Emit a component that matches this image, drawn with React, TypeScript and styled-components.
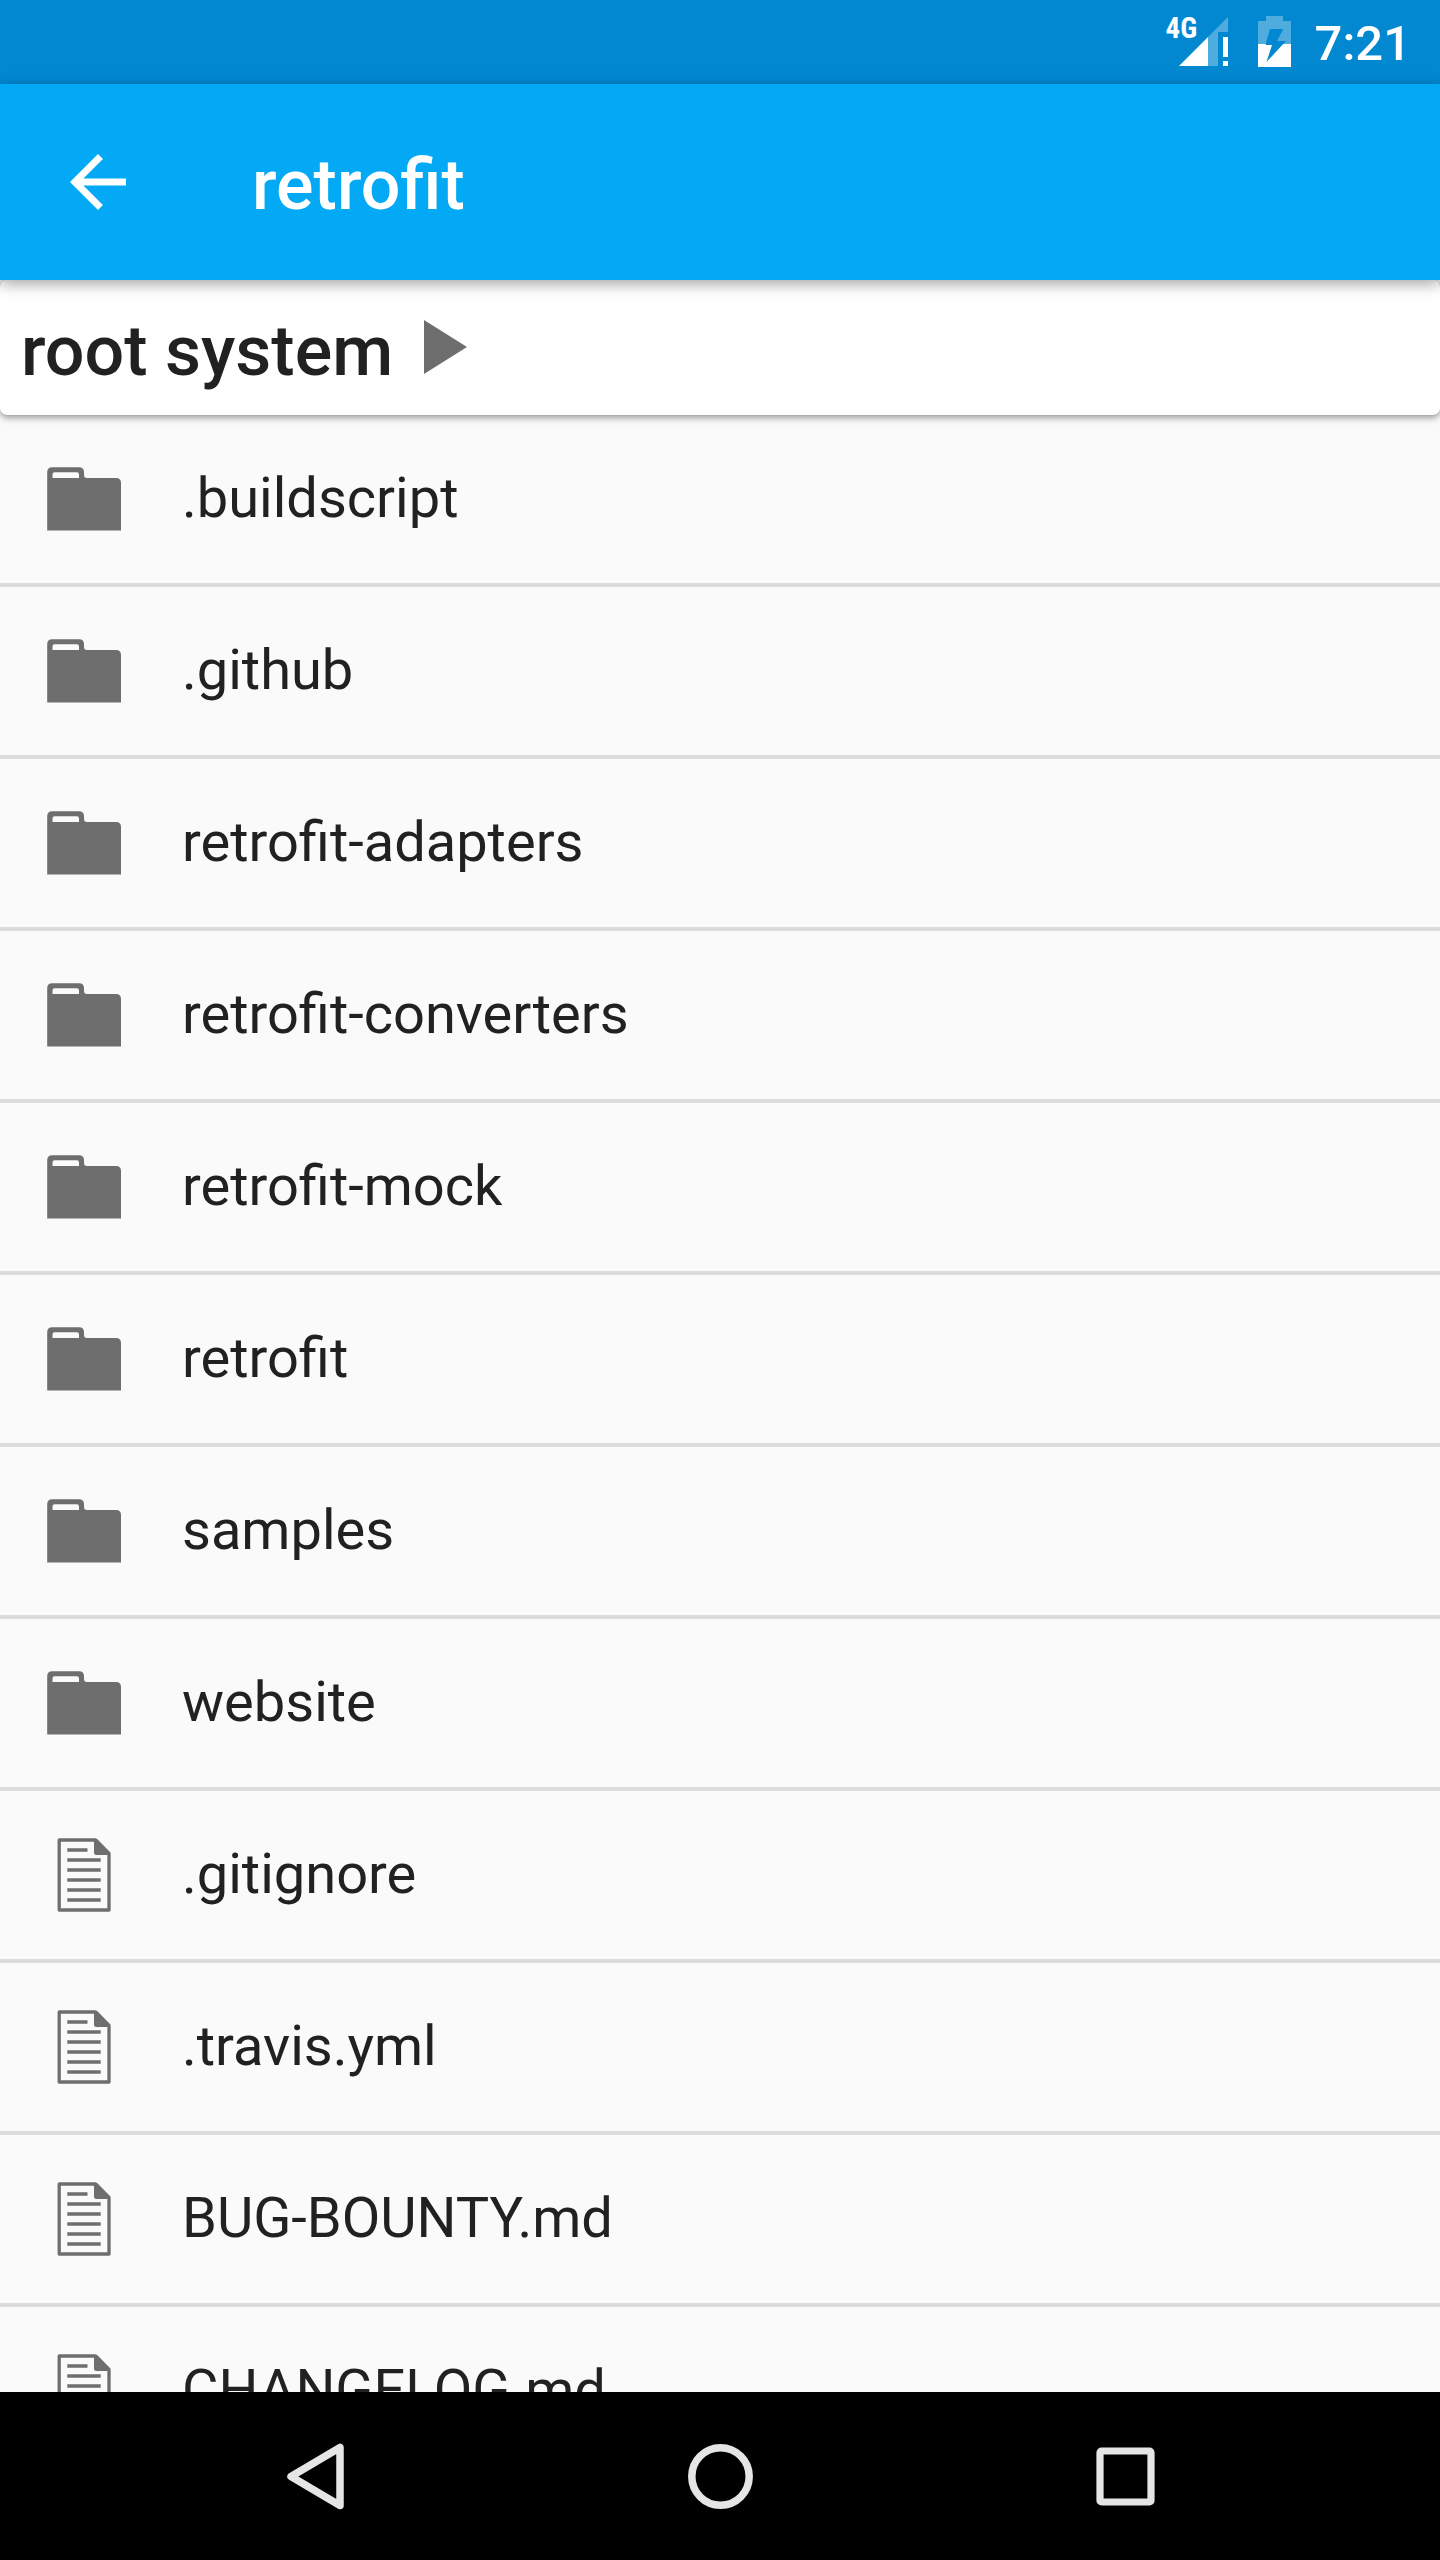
import React from "react";
import styled, { createGlobalStyle } from "styled-components";

const GlobalStyle = createGlobalStyle`
  *, *::before, *::after { box-sizing: border-box; }
  body {
    margin: 0;
    background: #fafafa;
    color: #212121;
    font-family: Roboto, "Liberation Sans", sans-serif;
  }
  button {
    margin: 0;
    padding: 0;
    border: 0;
    background: none;
    color: inherit;
    font: inherit;
    cursor: pointer;
  }
`;

const Screen = styled.div`
  display: flex;
  flex-direction: column;
  height: 100vh;
  overflow: hidden;
`;

const StatusBar = styled.div`
  flex: none;
  display: flex;
  align-items: center;
  justify-content: flex-end;
  height: 84px;
  padding-right: 29px;
  background: #0288d1;
  color: #fff;
`;

const Signal = styled.div`
  position: relative;
  width: 50px;
  height: 52px;
  margin-right: 29px;
`;

const NetworkType = styled.span`
  position: absolute;
  top: 0;
  left: -13px;
  font-family: "Roboto Condensed", "Liberation Sans Narrow", Roboto, sans-serif;
  font-size: 29px;
  font-weight: 700;
  line-height: 24px;
`;

const StatusIcon = styled.svg`
  display: block;
  flex: none;
  height: 52px;
`;

const Clock = styled.time`
  margin-left: 24px;
  padding-top: 4px;
  font-size: 49px;
  font-weight: 500;
  line-height: 80px;
`;

const AppBar = styled.header`
  position: relative;
  z-index: 1;
  flex: none;
  display: flex;
  align-items: center;
  gap: 112px;
  height: 196px;
  padding: 0 56px;
  background: #03a9f4;
  color: #fff;
  box-shadow: 0 4px 14px rgba(0, 0, 0, 0.36);
`;

const IconButton = styled.button`
  flex: none;
  width: 84px;
  height: 84px;
`;

const Icon = styled.svg`
  display: block;
  flex: none;
  width: 84px;
  height: 84px;
`;

const Title = styled.h1`
  margin: 0;
  padding-top: 6px;
  font-size: 70px;
  font-weight: 500;
  line-height: 84px;
`;

const Breadcrumb = styled.nav`
  flex: none;
  display: flex;
  align-items: center;
  height: 135px;
  padding: 7px 21px 0;
  border-radius: 7px;
  background: #fff;
  box-shadow: 0 3px 7px rgba(0, 0, 0, 0.36), 0 0 3px rgba(0, 0, 0, 0.16);
`;

const Crumb = styled.button`
  display: flex;
  align-items: center;
  gap: 31px;
  font-size: 70px;
  font-weight: 500;
  line-height: 84px;
`;

const CrumbArrow = styled.svg`
  display: block;
  width: 43px;
  height: 54px;
  margin-bottom: 9px;
`;

const FileList = styled.ul`
  flex: 1;
  min-height: 0;
  margin: 0;
  padding: 0;
  overflow-y: auto;
  scrollbar-width: none;
  list-style: none;
`;

const Row = styled.li`
  border-bottom: 4px solid #dcdcdc;
`;

const RowLink = styled.a`
  display: flex;
  align-items: center;
  gap: 56px;
  height: 168px;
  padding: 0 42px;
  color: inherit;
  text-decoration: none;
`;

const FileName = styled.span`
  padding-bottom: 3px;
  font-size: 56px;
  line-height: 66px;
`;

const NavBar = styled.nav`
  flex: none;
  display: flex;
  height: 168px;
  padding: 0 112px;
  background: #000;
`;

const NavButton = styled.button`
  flex: 1;
  display: flex;
  align-items: center;
  justify-content: center;
`;

const FolderIcon = () => (
  <Icon viewBox="0 0 84 84" fill="#6e6e6e" aria-hidden="true">
    <path
      fillRule="evenodd"
      d="M5.200 73.500V15.200Q5.200 10.200 10.200 10.200H37Q42 10.200 42 15.200V18Q42 21 45 21H74Q79 21 79 26V73.500ZM10.500 21H37V17.500Q37 15.300 34.800 15.300H12.700Q10.500 15.300 10.500 17.500Z"
    />
  </Icon>
);

const DocumentIcon = () => (
  <Icon viewBox="0 0 84 84" fill="none" stroke="#6e6e6e" strokeWidth="3.300" aria-hidden="true">
    <path d="M17.200 7H53.500L67 20.500V77H17.200Z" strokeLinejoin="round" />
    <path d="M52 6H55L68 19.500V22H54.500Q52 22 52 19.500Z" fill="#6e6e6e" stroke="none" />
    <path d="M25.300 17H45.500M25.300 27H58.700M25.300 37H58.700M25.300 47H58.700M25.300 57H58.700M25.300 67H58.700" />
  </Icon>
);

type Entry = { name: string; kind: "folder" | "file" };

const entries: Entry[] = [
  { name: ".buildscript", kind: "folder" },
  { name: ".github", kind: "folder" },
  { name: "retrofit-adapters", kind: "folder" },
  { name: "retrofit-converters", kind: "folder" },
  { name: "retrofit-mock", kind: "folder" },
  { name: "retrofit", kind: "folder" },
  { name: "samples", kind: "folder" },
  { name: "website", kind: "folder" },
  { name: ".gitignore", kind: "file" },
  { name: ".travis.yml", kind: "file" },
  { name: "BUG-BOUNTY.md", kind: "file" },
  { name: "CHANGELOG.md", kind: "file" },
];

export default function App() {
  return (
    <Screen>
      <GlobalStyle />
      <StatusBar>
        <Signal>
          <StatusIcon viewBox="0 0 50 52" width="50" aria-hidden="true">
            <path d="M29 21L49 1V16H39V50H29Z" fill="#fff" fillOpacity="0.300" />
            <path d="M0 50L29 21V50ZM44 21H49V41H44ZM44 45H49V50H44Z" fill="#fff" />
          </StatusIcon>
          <NetworkType>4G</NetworkType>
        </Signal>
        <StatusIcon viewBox="0 0 33 52" width="33" aria-hidden="true">
          <path d="M8 0H25V5H33V28H0V5H8Z" fill="#fff" fillOpacity="0.300" />
          <path d="M0 28H33V51H0Z" fill="#fff" />
          <path d="M12 13H25.300L19 25H28L8.500 46L14 29H7.500Z" fill="#0288d1" />
        </StatusIcon>
        <Clock>7:21</Clock>
      </StatusBar>

      <AppBar>
        <IconButton type="button" aria-label="Back">
          <Icon viewBox="0 0 24 24" fill="currentColor" aria-hidden="true">
            <path d="M20 11H7.830l5.590-5.590L12 4l-8 8 8 8 1.410-1.410L7.830 13H20v-2z" />
          </Icon>
        </IconButton>
        <Title>retrofit</Title>
      </AppBar>

      <Breadcrumb aria-label="Path">
        <Crumb type="button">
          root system
          <CrumbArrow viewBox="0 0 43 54" fill="#6e6e6e" aria-hidden="true">
            <path d="M0 0L43 27L0 54Z" />
          </CrumbArrow>
        </Crumb>
      </Breadcrumb>

      <FileList>
        {entries.map(({ name, kind }) => (
          <Row key={name}>
            <RowLink href={`#${name}`}>
              {kind === "folder" ? <FolderIcon /> : <DocumentIcon />}
              <FileName>{name}</FileName>
            </RowLink>
          </Row>
        ))}
      </FileList>

      <NavBar aria-label="System">
        <NavButton type="button" aria-label="Back">
          <Icon viewBox="0 0 84 84" fill="none" stroke="#e5e5e5" strokeWidth="7.500" strokeLinejoin="round" aria-hidden="true">
            <path d="M18 42.500L67 13.500V71.500Z" />
          </Icon>
        </NavButton>
        <NavButton type="button" aria-label="Home">
          <Icon viewBox="0 0 84 84" fill="none" stroke="#e5e5e5" strokeWidth="7.500" aria-hidden="true">
            <circle cx="42.500" cy="42.500" r="28.700" />
          </Icon>
        </NavButton>
        <NavButton type="button" aria-label="Overview">
          <Icon viewBox="0 0 84 84" fill="none" stroke="#e5e5e5" strokeWidth="7.200" aria-hidden="true">
            <rect x="17" y="17" width="51" height="51" rx="1.500" />
          </Icon>
        </NavButton>
      </NavBar>
    </Screen>
  );
}
